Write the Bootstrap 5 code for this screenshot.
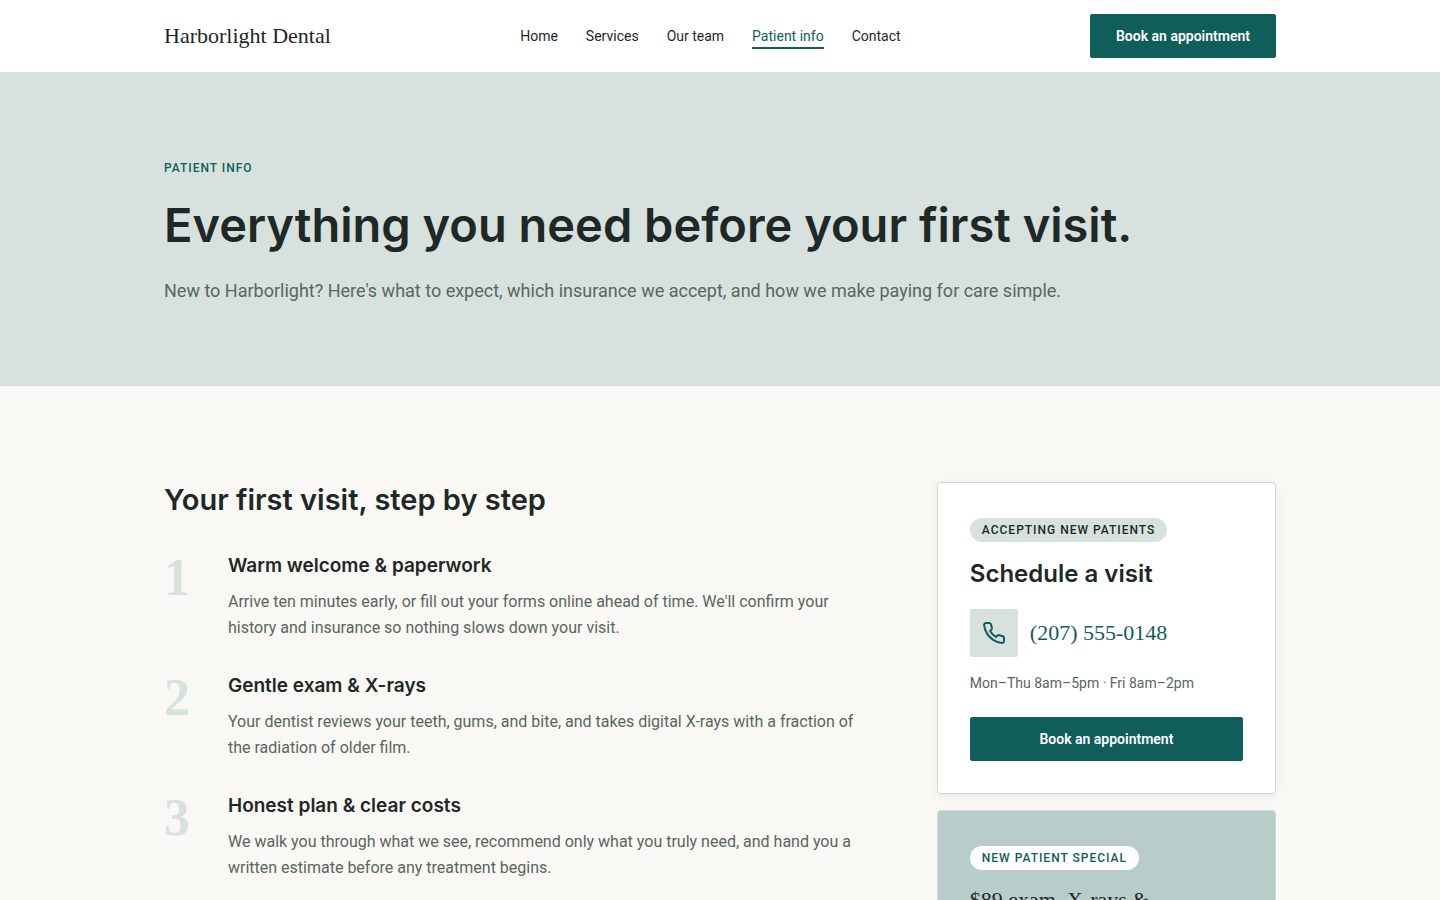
<!DOCTYPE html>
<html lang="en">
<head>
<meta charset="utf-8">
<meta name="viewport" content="width=device-width, initial-scale=1">
<title>Patient info – Harborlight Dental</title>
<link href="https://cdn.jsdelivr.net/npm/bootstrap@5.3.0/dist/css/bootstrap.min.css" rel="stylesheet">
<style>
:root{--teal:#0f5e59;--ink:#1d2827;--muted:#586662;--mist:#d7e1de;--sage:#b8ccca;--paper:#faf8f4}
body{background:var(--paper);color:var(--ink);font-family:Roboto,"Noto Sans",sans-serif;font-size:16px;line-height:26px}
.page-width{max-width:1160px;padding-left:24px;padding-right:24px}
h1,h2,h3,.title{font-family:Inter,"Open Sans",sans-serif;font-weight:600;color:var(--ink)}
.serif,.title.serif{font-family:"Liberation Serif",serif}
h1{font-size:47px;line-height:56px}
h2{font-size:29px;line-height:36px}
h3{font-size:19px;line-height:24px}
.site-header{border-bottom:1px solid #d2ddd9}
.header-row{min-height:72px}
.site-header .navbar-brand{font-size:22px;line-height:28px;font-weight:500;color:var(--ink)}
.site-nav{gap:28px}
.site-nav .nav-link,.navbar-expand-md .site-nav .nav-link{font-size:14px;line-height:22px;padding:2px 0 0;color:var(--ink);border-bottom:2px solid transparent}
.site-nav .nav-link.active,.navbar-expand-md .site-nav .nav-link.active{color:var(--teal);border-color:var(--teal)}
.btn-teal{--bs-btn-color:#fff;--bs-btn-bg:var(--teal);--bs-btn-border-color:var(--teal);--bs-btn-hover-color:#fff;--bs-btn-hover-bg:#0a4945;--bs-btn-hover-border-color:#0a4945;--bs-btn-border-radius:2px;--bs-btn-font-size:14px;--bs-btn-font-weight:600;--bs-btn-line-height:20px;--bs-btn-padding-y:11px;--bs-btn-padding-x:25px}
.hero{background:var(--mist);border-bottom:1px solid #d2ddd9;padding:87px 0 80px}
.eyebrow,.pill{font-size:12px;line-height:16px;font-weight:500;letter-spacing:1px;text-transform:uppercase}
.eyebrow{color:var(--teal);margin-bottom:21px}
.intro{font-size:18px;line-height:28px;color:var(--muted)}
.columns{display:grid;grid-template-columns:minmax(0,1fr);gap:64px;padding-top:96px}
.steps{gap:33px;padding-top:36px}
.step-number{flex:0 0 64px;font-size:52px;line-height:48px;font-weight:700;color:var(--mist)}
.step-text{color:var(--muted);margin:11px 0 0}
.panel{--bs-card-border-color:#cfd8d7;--bs-card-border-radius:4px;--bs-card-inner-border-radius:3px;padding:35px 32px 32px}
.panel-visit{box-shadow:0 2px 8px rgba(29,40,39,.08)}
.panel-offer{--bs-card-bg:var(--sage)}
.pill{border-radius:12px;padding:4px 12px;background:var(--mist)}
.panel-offer .pill{background:#fff;color:var(--teal)}
.panel-visit .title{font-size:24px;line-height:32px;margin:16px 0 19px}
.panel-offer .title{font-size:22px;line-height:28px;font-weight:500;margin:16px 0 0}
.phone-icon{width:48px;height:48px;background:var(--mist);border-radius:2px;color:var(--teal)}
.phone-link{gap:12px;font-size:22px;line-height:28px;color:var(--teal)}
.hours{font-size:14px;line-height:20px;color:var(--muted);margin:16px 0 24px}
@media (min-width:992px){.columns{grid-template-columns:minmax(0,2.09fr) minmax(0,1fr)}}
</style>
</head>
<body>
<header class="site-header navbar navbar-expand-md bg-white py-0">
  <div class="container-fluid page-width header-row">
    <a class="navbar-brand serif p-0 m-0" href="#">Harborlight Dental</a>
    <nav class="navbar-nav flex-row site-nav" aria-label="Main">
      <a class="nav-link" href="#">Home</a>
      <a class="nav-link" href="#">Services</a>
      <a class="nav-link" href="#">Our team</a>
      <a class="nav-link active" aria-current="page" href="#">Patient info</a>
      <a class="nav-link" href="#">Contact</a>
    </nav>
    <button type="button" class="btn btn-teal">Book an appointment</button>
  </div>
</header>
<section class="hero">
  <div class="container-fluid page-width">
    <p class="eyebrow">Patient info</p>
    <h1 class="mb-4">Everything you need before your first visit.</h1>
    <p class="intro mb-0">New to Harborlight? Here's what to expect, which insurance we accept, and how we make paying for care simple.</p>
  </div>
</section>
<main class="container-fluid page-width columns">
  <section>
    <h2 class="mb-0">Your first visit, step by step</h2>
    <ol class="steps list-unstyled d-flex flex-column mb-0">
      <li class="d-flex">
        <span class="step-number serif">1</span>
        <div><h3 class="mb-0">Warm welcome &amp; paperwork</h3>
        <p class="step-text">Arrive ten minutes early, or fill out your forms online ahead of time. We'll confirm your history and insurance so nothing slows down your visit.</p></div>
      </li>
      <li class="d-flex">
        <span class="step-number serif">2</span>
        <div><h3 class="mb-0">Gentle exam &amp; X-rays</h3>
        <p class="step-text">Your dentist reviews your teeth, gums, and bite, and takes digital X-rays with a fraction of the radiation of older film.</p></div>
      </li>
      <li class="d-flex">
        <span class="step-number serif">3</span>
        <div><h3 class="mb-0">Honest plan &amp; clear costs</h3>
        <p class="step-text">We walk you through what we see, recommend only what you truly need, and hand you a written estimate before any treatment begins.</p></div>
      </li>
    </ol>
  </section>
  <aside class="d-flex flex-column gap-3">
    <section class="card panel panel-visit">
      <span class="pill align-self-start">Accepting new patients</span>
      <h3 class="title">Schedule a visit</h3>
      <a class="phone-link serif d-flex align-items-center text-decoration-none" href="tel:+12075550148">
        <span class="phone-icon d-flex align-items-center justify-content-center">
          <svg width="24" height="24" viewBox="0 0 24 24" fill="none" stroke="currentColor" stroke-width="2" stroke-linecap="round" stroke-linejoin="round" aria-hidden="true"><path d="M22 16.92v3a2 2 0 0 1-2.18 2 19.79 19.79 0 0 1-8.63-3.07 19.5 19.5 0 0 1-6-6A19.79 19.79 0 0 1 2.12 4.18 2 2 0 0 1 4.11 2h3a2 2 0 0 1 2 1.72c.13.96.36 1.9.7 2.81a2 2 0 0 1-.45 2.11L8.09 9.91a16 16 0 0 0 6 6l1.27-1.27a2 2 0 0 1 2.11-.45c.91.34 1.85.57 2.81.7A2 2 0 0 1 22 16.92z"/></svg>
        </span>
        <span>(207) 555-0148</span>
      </a>
      <p class="hours">Mon–Thu 8am–5pm · Fri 8am–2pm</p>
      <button type="button" class="btn btn-teal w-100">Book an appointment</button>
    </section>
    <section class="card panel panel-offer">
      <span class="pill align-self-start">New patient special</span>
      <h3 class="title serif">$89 exam, X-rays &amp;</h3>
    </section>
  </aside>
</main>
<script src="https://cdn.jsdelivr.net/npm/bootstrap@5.3.0/dist/js/bootstrap.bundle.min.js"></script>
</body>
</html>
